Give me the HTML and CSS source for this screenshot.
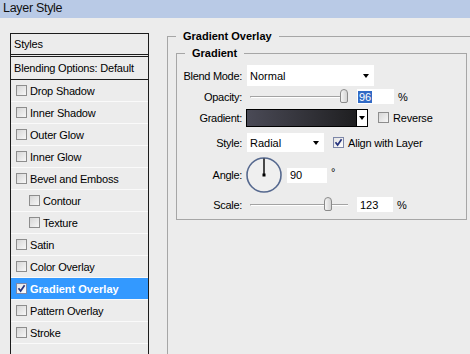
FILE: index.html
```html
<!DOCTYPE html>
<html lang="en">

<head>
    <meta charset="UTF-8">
    <title>Layer Style</title>
    <link rel="stylesheet" href="styles.css">
</head>

<body>
    <div class="titlebar">Layer Style</div>
    <div class="dialog">
        <ul class="style-list">
            <li class="item head">Styles</li>
            <li class="item blend">Blending Options: Default</li>
            <li class="item"><span class="check"></span>Drop Shadow</li>
            <li class="item"><span class="check"></span>Inner Shadow</li>
            <li class="item"><span class="check"></span>Outer Glow</li>
            <li class="item"><span class="check"></span>Inner Glow</li>
            <li class="item"><span class="check"></span>Bevel and Emboss</li>
            <li class="item sub"><span class="check"></span>Contour</li>
            <li class="item sub"><span class="check"></span>Texture</li>
            <li class="item"><span class="check"></span>Satin</li>
            <li class="item"><span class="check"></span>Color Overlay</li>
            <li class="item active">
                <span class="check on"><svg viewBox="0 0 9 9"><path d="M1.5 4.2 L3.6 7 L7.6 1.2" /></svg></span>Gradient Overlay
            </li>
            <li class="item"><span class="check"></span>Pattern Overlay</li>
            <li class="item"><span class="check"></span>Stroke</li>
            <li class="item empty"></li>
        </ul>

        <fieldset class="group outer">
            <legend>Gradient Overlay</legend>
            <fieldset class="group inner">
                <legend>Gradient</legend>

                <div class="row">
                    <span class="lbl">Blend Mode:</span>
                    <div class="select blend-mode"><span>Normal</span><i class="arrow"></i></div>
                </div>

                <div class="row">
                    <span class="lbl">Opacity:</span>
                    <div class="slider"><div class="track"></div><span class="thumb" style="left: 92%"></span></div>
                    <div class="field"><span class="selected">96</span></div>
                    <span class="unit">%</span>
                </div>

                <div class="row">
                    <span class="lbl">Gradient:</span>
                    <div class="swatch"><div class="swatch-fill"></div><div class="swatch-btn"><i class="arrow"></i></div></div>
                    <span class="check reverse"></span>
                    <span class="opt">Reverse</span>
                </div>

                <div class="row row-style">
                    <span class="lbl">Style:</span>
                    <div class="select gradient-style"><span>Radial</span><i class="arrow"></i></div>
                    <span class="check on align"><svg viewBox="0 0 9 9"><path d="M1.5 4.2 L3.6 7 L7.6 1.2" /></svg></span>
                    <span class="opt">Align with Layer</span>
                </div>

                <div class="row row-angle">
                    <span class="lbl">Angle:</span>
                    <svg class="dial" width="36" height="36" viewBox="0 0 36 36">
                        <circle cx="18" cy="18" r="17" fill="#efefef" stroke="#56698f" stroke-width="1.6" />
                        <line x1="18" y1="18" x2="18" y2="1.5" stroke="#000" stroke-width="1.4" />
                        <rect x="16.5" y="16.5" width="3" height="3" fill="#000" />
                    </svg>
                    <div class="field angle-field">90</div>
                    <span class="degree">°</span>
                </div>

                <div class="row row-scale">
                    <span class="lbl">Scale:</span>
                    <div class="slider"><div class="track"></div><span class="thumb" style="left: 75.5%"></span></div>
                    <div class="field scale-field">123</div>
                    <span class="unit">%</span>
                </div>
            </fieldset>
        </fieldset>
    </div>
</body>

</html>
```

FILE: styles.css
```css
body {
    margin: 0;
    width: 470px;
    height: 354px;
    overflow: hidden;
    background: #ececec;
    font-family: 'Liberation Sans', Arial, sans-serif;
    font-size: 11px;
    color: #000;
}

.titlebar {
    height: 18px;
    line-height: 17px;
    padding-left: 3px;
    background: #b9cae6;
    font-size: 12.5px;
    letter-spacing: -0.3px;
    color: #111;
}

.dialog {
    display: flex;
    align-items: flex-start;
    column-gap: 18px;
    padding: 11px 0 0 10px;
}

/* Styles list on the left */
.style-list {
    list-style: none;
    margin: 4px 0 0;
    padding: 0;
    width: 139px;
    height: 340px;
    flex: none;
    box-sizing: border-box;
    border: 1px solid #1c1c1c;
    border-bottom: none;
    display: flex;
    flex-direction: column;
}

.item {
    height: 21px;
    flex: none;
    display: flex;
    align-items: center;
    gap: 3px;
    padding-left: 5px;
    border-bottom: 1px solid #fafafa;
    white-space: nowrap;
    letter-spacing: -0.2px;
}

.item.head {
    height: 20px;
    padding-left: 3px;
    border-bottom: 1px solid #1c1c1c;
    margin-bottom: 1px;
}

.item.blend {
    height: 22px;
    padding-left: 3px;
    border-top: 1px solid #1c1c1c;
    border-bottom: 1px solid #1c1c1c;
}

.item.sub {
    padding-left: 18px;
}

.item.active {
    background: #3399ff;
    color: #fff;
    font-weight: bold;
    letter-spacing: 0;
}

.item.empty {
    flex: 1;
    border-bottom: none;
}

/* Checkboxes */
.check {
    width: 11px;
    height: 11px;
    flex: none;
    box-sizing: border-box;
    border: 1px solid #8d8d8d;
    background: linear-gradient(135deg, #d6d6d6, #f7f7f7);
    display: flex;
}

.check.on {
    border-color: #7d87a8;
    background: linear-gradient(135deg, #e4e4e4, #fff);
}

.check svg {
    width: 9px;
    height: 9px;
}

.check svg path {
    fill: none;
    stroke: #25337d;
    stroke-width: 1.7;
}

/* Group boxes */
.group {
    margin: 0;
    min-width: 0;
    border: 1px solid #a6a6a6;
}

.group legend {
    padding: 0 7px;
    line-height: 14px;
    font-weight: bold;
}

.outer {
    width: 330px;
    height: 360px;
    flex: none;
    box-sizing: border-box;
    padding: 3px 0 0 8px;
}

.inner {
    width: 291px;
    box-sizing: border-box;
    padding: 5px 0 3px 8px;
}

.row {
    display: flex;
    align-items: center;
    height: 21px;
}

.row-style {
    height: 29px;
}

.row-angle {
    height: 36px;
}

.row-scale {
    height: 23px;
}

.lbl {
    width: 57px;
    flex: none;
    display: flex;
    justify-content: flex-end;
    margin-right: 5px;
    white-space: nowrap;
    letter-spacing: -0.3px;
}

/* Drop-down boxes */
.select {
    display: flex;
    align-items: center;
    justify-content: space-between;
    box-sizing: border-box;
    height: 21px;
    padding: 0 5px 0 3px;
    background: #fff;
}

.blend-mode {
    width: 127px;
}

.gradient-style {
    width: 77px;
    height: 19px;
}

.arrow {
    width: 0;
    height: 0;
    border-left: 3.5px solid transparent;
    border-right: 3.5px solid transparent;
    border-top: 4px solid #000;
}

/* Sliders */
.slider {
    position: relative;
    width: 98px;
    height: 15px;
    margin-left: 3px;
    display: flex;
    align-items: center;
}

.track {
    width: 100%;
    height: 0;
    border-top: 1px solid #a3a3a3;
    border-bottom: 1px solid #fff;
    border-left: 1px solid #a3a3a3;
}

.thumb {
    position: absolute;
    top: 0;
    width: 8px;
    height: 14px;
    box-sizing: border-box;
    border: 1px solid #8a8a8a;
    border-radius: 4px 4px 2px 2px;
    background: linear-gradient(90deg, #f4f4f4, #d4d4d4);
}

/* Number fields */
.field {
    display: flex;
    align-items: center;
    box-sizing: border-box;
    width: 37px;
    height: 15px;
    margin-left: 9px;
    padding-left: 3px;
    background: #fff;
}

.selected {
    background: #316ac5;
    color: #fff;
    padding: 0 1px;
    margin-left: -2px;
}

.unit {
    margin-left: 4px;
}

.angle-field {
    width: 40px;
    margin-left: 5px;
}

.scale-field {
    width: 36px;
}

.degree {
    margin-left: 4px;
    margin-bottom: 7px;
}

/* Gradient picker */
.swatch {
    display: flex;
    width: 122px;
    height: 18px;
    margin-left: -1px;
    box-sizing: border-box;
    border: 1px solid #000;
}

.swatch-fill {
    flex: 1;
    background: linear-gradient(90deg, #4a4a56, #1f1f21);
}

.swatch-btn {
    width: 10px;
    border-left: 1px solid #000;
    background: #fff;
    display: flex;
    align-items: center;
    justify-content: center;
}

.reverse {
    margin-left: 10px;
}

.align {
    margin-left: 9px;
}

.opt {
    margin-left: 4px;
    letter-spacing: -0.2px;
}

.dial {
    margin-left: -1px;
    flex: none;
}
```
